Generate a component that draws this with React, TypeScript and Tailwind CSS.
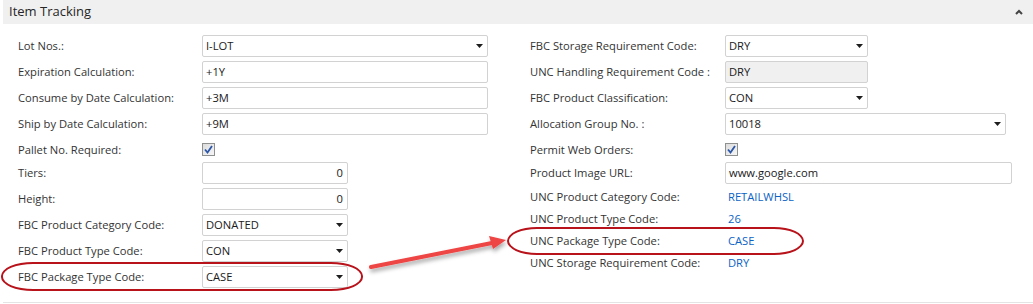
import React from "react";

type Row =
  | { label: string; kind: "select"; value: string; width: string }
  | { label: string; kind: "text"; value: string; width: string; align?: "right"; readOnly?: boolean }
  | { label: string; kind: "check" }
  | { label: string; kind: "link"; value: string };

const leftRows: Row[] = [
  { label: "Lot Nos.:", kind: "select", value: "I-LOT", width: "w-[286px]" },
  { label: "Expiration Calculation:", kind: "text", value: "+1Y", width: "w-[286px]" },
  { label: "Consume by Date Calculation:", kind: "text", value: "+3M", width: "w-[286px]" },
  { label: "Ship by Date Calculation:", kind: "text", value: "+9M", width: "w-[286px]" },
  { label: "Pallet No. Required:", kind: "check" },
  { label: "Tiers:", kind: "text", value: "0", width: "w-[146px]", align: "right" },
  { label: "Height:", kind: "text", value: "0", width: "w-[146px]", align: "right" },
  { label: "FBC Product Category Code:", kind: "select", value: "DONATED", width: "w-[146px]" },
  { label: "FBC Product Type Code:", kind: "select", value: "CON", width: "w-[146px]" },
  { label: "FBC Package Type Code:", kind: "select", value: "CASE", width: "w-[146px]" },
];

const rightRows: Row[] = [
  { label: "FBC Storage Requirement Code:", kind: "select", value: "DRY", width: "w-[143px]" },
  { label: "UNC Handling Requirement Code :", kind: "text", value: "DRY", width: "w-[143px]", readOnly: true },
  { label: "FBC Product Classification:", kind: "select", value: "CON", width: "w-[143px]" },
  { label: "Allocation Group No. :", kind: "select", value: "10018", width: "w-[281px]" },
  { label: "Permit Web Orders:", kind: "check" },
  { label: "Product Image URL:", kind: "text", value: "www.google.com", width: "w-[287px]" },
  { label: "UNC Product Category Code:", kind: "link", value: "RETAILWHSL" },
  { label: "UNC Product Type Code:", kind: "link", value: "26" },
  { label: "UNC Package Type Code:", kind: "link", value: "CASE" },
  { label: "UNC Storage Requirement Code:", kind: "link", value: "DRY" },
];

function Caret() {
  return (
    <svg width="7" height="4" viewBox="0 0 7 4" className="shrink-0">
      <path d="M0 0h7L3.5 4z" fill="#1e1e1e" />
    </svg>
  );
}

function CheckBox() {
  return (
    <div className="w-[13px] h-[13px] border border-[#8e8f8f] bg-gradient-to-br from-[#dcdcdc] to-[#f6f6f6] flex items-center justify-center">
      <svg width="9" height="9" viewBox="0 0 9 9">
        <path d="M1 4.5 L3.5 7.5 L8 1" fill="none" stroke="#2c56a8" strokeWidth="1.8" />
      </svg>
    </div>
  );
}

function Field({ row, labelWidth }: { row: Row; labelWidth: string }) {
  if (row.kind === "check") {
    return (
      <div className="flex h-[23px]">
        <div className={`${labelWidth} leading-[22px] text-[#333]`}>{row.label}</div>
        <div className="pt-[4px]">
          <CheckBox />
        </div>
      </div>
    );
  }
  if (row.kind === "link") {
    return (
      <div className="flex h-[22px] items-center">
        <div className={`${labelWidth} text-[#333]`}>{row.label}</div>
        <div className="pl-[3px] text-[#0b63c5]">{row.value}</div>
      </div>
    );
  }
  const h = row.label === "Product Image URL:" ? "h-[24px]" : "h-[26px]";
  return (
    <div className={`flex ${h}`}>
      <div className={`${labelWidth} leading-[22px] text-[#333]`}>{row.label}</div>
      <div
        className={`${row.width} h-[22px] border border-[#d2d2d2] rounded-[2px] flex items-center text-[#1a1a1a] ${
          row.kind === "text" && row.readOnly ? "bg-[#f0f0f0]" : "bg-white"
        } ${row.kind === "text" && row.align === "right" ? "justify-end pr-[4px]" : "pl-[3px]"} ${
          row.kind === "select" ? "justify-between pr-[4px]" : ""
        }`}
      >
        <span>{row.value}</span>
        {row.kind === "select" && <Caret />}
      </div>
    </div>
  );
}

export default function App() {
  return (
    <div className="relative w-[1033px] h-[304px] bg-white overflow-hidden font-['Open_Sans','Liberation_Sans',sans-serif] text-[11.2px]">
      <div className="ml-[3px] h-[24px] bg-[#f0f0f0] flex items-center justify-between pl-[6px] pr-[10px]">
        <span className="text-[13px] text-[#262626]">Item Tracking</span>
        <svg width="8" height="6" viewBox="0 0 8 6">
          <path d="M1 5 L4 2 L7 5" fill="none" stroke="#444" strokeWidth="2" />
        </svg>
      </div>

      <div className="flex pt-[11px] h-[279px] ml-[3px] border-b border-[#e4e4e4]">
        <div className="ml-[15px] w-[470px]">
          {leftRows.map((r) => (
            <Field key={r.label} row={r} labelWidth="w-[184px]" />
          ))}
        </div>
        <div className="ml-[42px]">
          {rightRows.map((r) => (
            <Field key={r.label} row={r} labelWidth="w-[195px]" />
          ))}
        </div>
      </div>

      {/* annotations */}
      <div className="absolute left-[1px] top-[262px] w-[362px] h-[29px] rounded-[32px/14px] border-2 border-[#b8121b]" />
      <div className="absolute left-[507px] top-[227px] w-[297px] h-[28px] rounded-[30px/14px] border-2 border-[#b8121b]" />
      <svg className="absolute left-0 top-0" width="1033" height="304" viewBox="0 0 1033 304">
        <defs>
          <filter id="sh" x="-20%" y="-50%" width="140%" height="200%">
            <feDropShadow dx="1" dy="3" stdDeviation="2" floodColor="#000" floodOpacity="0.35" />
          </filter>
        </defs>
        <g filter="url(#sh)">
          <path d="M371 267 L492 243" stroke="#ee4444" strokeWidth="4" strokeLinecap="round" />
          <path d="M506 240 L489 236 L493 249 Z" fill="#ee4444" />
        </g>
      </svg>
    </div>
  );
}
